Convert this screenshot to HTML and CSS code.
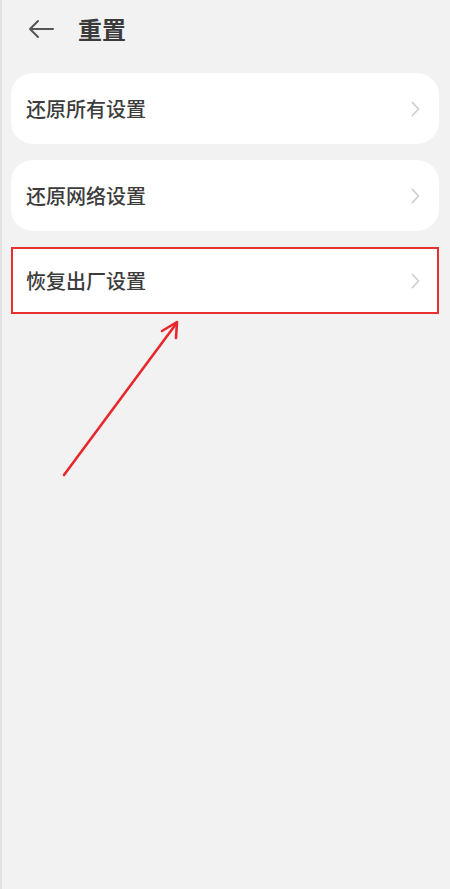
FILE: index.html
```html
<!DOCTYPE html>
<html lang="zh-CN">
<head>
<meta charset="utf-8">
<link rel="stylesheet" href="styles.css">
</head>
<body>
<div class="page">
  <header class="topbar">
    <svg class="back" width="26" height="20" viewBox="0 0 26 20"><path d="M25 10H2M10 2L2 10l8 8" fill="none" stroke="#555" stroke-width="2" stroke-linecap="round" stroke-linejoin="round"/></svg>
    <h1 class="title">重置</h1>
  </header>
  <div class="list">
    <div class="card"><span class="label">还原所有设置</span><svg class="chev" width="9" height="16" viewBox="0 0 9 16"><path d="M1.5 1.5L7.5 8l-6 6.5" fill="none" stroke="#cfcfcf" stroke-width="1.8" stroke-linecap="round" stroke-linejoin="round"/></svg></div>
    <div class="card"><span class="label">还原网络设置</span><svg class="chev" width="9" height="16" viewBox="0 0 9 16"><path d="M1.5 1.5L7.5 8l-6 6.5" fill="none" stroke="#cfcfcf" stroke-width="1.8" stroke-linecap="round" stroke-linejoin="round"/></svg></div>
    <div class="card card-marked"><span class="label">恢复出厂设置</span><svg class="chev" width="9" height="16" viewBox="0 0 9 16"><path d="M1.5 1.5L7.5 8l-6 6.5" fill="none" stroke="#cfcfcf" stroke-width="1.8" stroke-linecap="round" stroke-linejoin="round"/></svg></div>
  </div>
  <svg class="pointer" width="450" height="889" viewBox="0 0 450 889">
    <path d="M64 475L176 324" fill="none" stroke="#e8282a" stroke-width="2.6" stroke-linecap="round"/>
    <path d="M162 331L177 322l-1 16" fill="none" stroke="#e8282a" stroke-width="2.6" stroke-linecap="round" stroke-linejoin="round"/>
  </svg>
</div>
</body>
</html>
```
FILE: styles.css
```css
html, body {
  margin: 0;
  padding: 0;
  background: #f2f2f2;
}
.page {
  position: relative;
  width: 450px;
  height: 889px;
  box-sizing: border-box;
  border-left: 2px solid #e2e2e2;
  background: #f2f2f2;
  font-family: "Noto Sans CJK SC", "Noto Sans", sans-serif;
  color: #333;
  overflow: hidden;
}
.topbar {
  display: flex;
  align-items: center;
  height: 58px;
  padding-left: 26px;
  box-sizing: border-box;
}
.back {
  display: block;
}
.title {
  margin: 0 0 0 24px;
  font-size: 24px;
  font-weight: 700;
  color: #3a3a3a;
  line-height: 1;
}
.list {
  display: flex;
  flex-direction: column;
  gap: 16px;
  padding: 15px 11px 0 9px;
}
.card {
  display: flex;
  align-items: center;
  justify-content: space-between;
  height: 71px;
  background: #fff;
  border-radius: 22px;
  padding: 0 19px 0 15px;
  box-sizing: border-box;
}
.card-marked {
  height: 67px;
  border-radius: 0;
  border: 2px solid #e8302f;
  padding: 0 17px 0 13px;
}
.label {
  font-size: 20px;
  font-weight: 500;
  color: #3c3c3c;
}
.chev {
  display: block;
}
.pointer {
  position: absolute;
  left: -2px;
  top: 0;
  pointer-events: none;
}
```
